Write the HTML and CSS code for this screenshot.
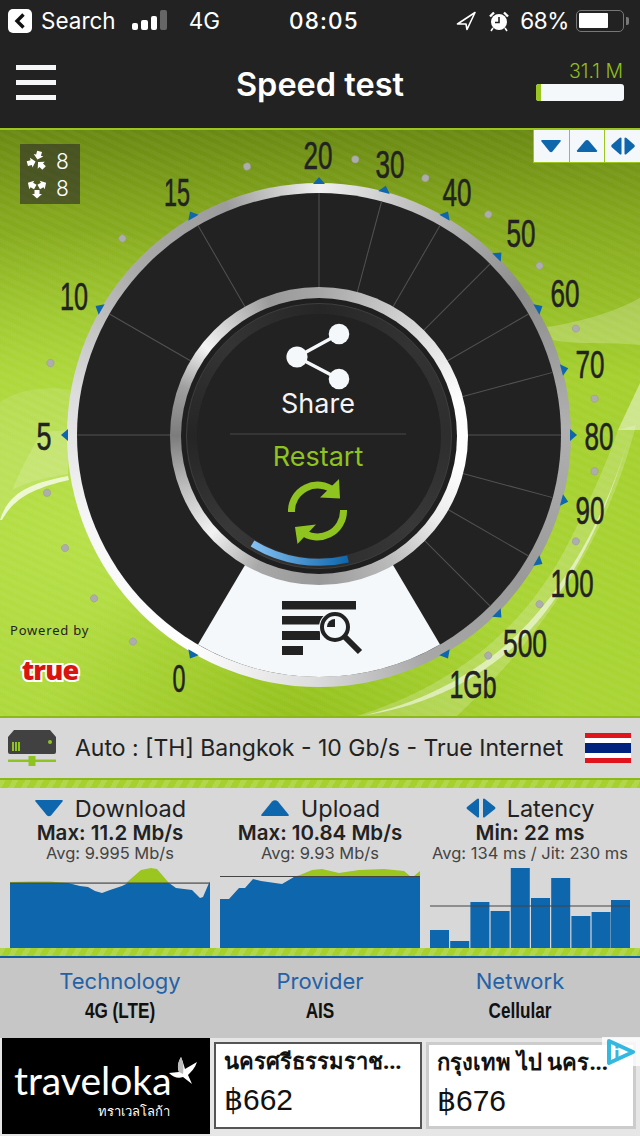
FILE: index.html
```html
<!DOCTYPE html>
<html lang="en">
<head>
    <meta charset="UTF-8">
    <meta name="viewport" content="width=device-width, initial-scale=1.0">
    <title>Speed test</title>
    <link rel="stylesheet" href="styles.css">
</head>
<body>
    <div class="status-bar">
        <div class="status-left">
            <span class="back-chip">
                <svg width="12" height="16" viewBox="0 0 12 16"><path d="M9.500 1.500 3 8l6.500 6.500" fill="none" stroke="#111" stroke-width="3.400"/></svg>
            </span>
            <span class="status-search">Search</span>
            <span class="signal"><i class="s1"></i><i class="s2"></i><i class="s3"></i><i class="s4"></i></span>
            <span class="status-net">4G</span>
        </div>
        <div class="status-time">08:05</div>
        <div class="status-right">
            <svg width="21" height="20" viewBox="0 0 21 20"><path d="M1.500 13 19 1.500 11 18.500l-1-5.500z" fill="none" stroke="#fff" stroke-width="1.600" stroke-linejoin="round"/></svg>
            <svg class="alarm" width="22" height="22" viewBox="0 0 22 22">
                <circle cx="11" cy="12" r="8" fill="#fff"/>
                <path d="M11 7v5.500H7" fill="none" stroke="#222" stroke-width="1.600"/>
                <path d="M2 6.500 6 2.500M20 6.500l-4-4" stroke="#fff" stroke-width="2.400"/>
                <path d="M5 18l-2 3M17 18l2 3" stroke="#fff" stroke-width="1.600"/>
            </svg>
            <span class="status-pct">68%</span>
            <span class="battery"><i></i></span>
            <span class="battery-nub"></span>
        </div>
    </div>

    <header class="app-bar">
        <div class="burger"><i></i><i></i><i></i></div>
        <h1>Speed test</h1>
        <div class="quota">
            <span class="quota-label">31.1 M</span>
            <span class="quota-bar"><i></i></span>
        </div>
    </header>

    <section class="dial">
        <svg class="dial-back" viewBox="0 130 640 586">
            <path d="M0 402C20 388 50 386 72 390L68 476C40 480 16 492 0 520z" fill="#fff" opacity=".12"/>
            <path d="M0 520C8 496 24 484 68 476L69 480C34 488 14 498 2 520z" fill="#fff" opacity=".75"/>
            <path d="M12 490C24 462 34 445 42 432L70 430 68 474C44 478 26 482 12 490z" fill="#fff" opacity=".16"/>
            <path d="M547 327C580 322 615 312 640 298V345C610 342 575 345 553 340z" fill="#fff" opacity=".22"/>
            <path d="M636 425C612 520 560 620 457 716H357C440 690 520 640 570 540 590 500 608 460 618 430z" fill="#fff" opacity=".2"/>
            <path d="M631 430C606 520 560 600 500 650 450 690 400 708 360 716 420 708 470 684 510 650 566 600 606 520 631 430z" fill="#fff" opacity=".55"/>
            <path d="M640 383V430L618 430z" fill="#fff" opacity=".45"/>
        </svg>

        <div class="bezel"><div class="face"></div></div>

        <svg class="dial-art" viewBox="0 130 640 586">
            <path class="wedge" d="M198 644.600A242 242 0 0 0 440 644.600L393 565 245 565z"/>

            <g class="spokes" transform="translate(319 435)">
                <line x1="-242" x2="-148"/>
                <line x1="-242" x2="-148" transform="rotate(30)"/>
                <line x1="-242" x2="-148" transform="rotate(60)"/>
                <line x1="-242" x2="-148" transform="rotate(90)"/>
                <line x1="-242" x2="-148" transform="rotate(105)"/>
                <line x1="-242" x2="-148" transform="rotate(120)"/>
                <line x1="-242" x2="-148" transform="rotate(135)"/>
                <line x1="-242" x2="-148" transform="rotate(150)"/>
                <line x1="-242" x2="-148" transform="rotate(165)"/>
                <line x1="-242" x2="-148" transform="rotate(180)"/>
                <line x1="-242" x2="-148" transform="rotate(195)"/>
                <line x1="-242" x2="-148" transform="rotate(210)"/>
                <line x1="-242" x2="-148" transform="rotate(225)"/>
            </g>

            <g class="marks" transform="translate(319 435)">
                <polygon points="-251,-6 -258,0 -251,6" transform="rotate(-60)"/>
                <polygon points="-251,-6 -258,0 -251,6"/>
                <polygon points="-251,-6 -258,0 -251,6" transform="rotate(30)"/>
                <polygon points="-251,-6 -258,0 -251,6" transform="rotate(60)"/>
                <polygon points="-251,-6 -258,0 -251,6" transform="rotate(90)"/>
                <polygon points="-251,-6 -258,0 -251,6" transform="rotate(105)"/>
                <polygon points="-251,-6 -258,0 -251,6" transform="rotate(120)"/>
                <polygon points="-251,-6 -258,0 -251,6" transform="rotate(135)"/>
                <polygon points="-251,-6 -258,0 -251,6" transform="rotate(150)"/>
                <polygon points="-251,-6 -258,0 -251,6" transform="rotate(165)"/>
                <polygon points="-251,-6 -258,0 -251,6" transform="rotate(180)"/>
                <polygon points="-251,-6 -258,0 -251,6" transform="rotate(195)"/>
                <polygon points="-251,-6 -258,0 -251,6" transform="rotate(210)"/>
                <polygon points="-251,-6 -258,0 -251,6" transform="rotate(225)"/>
                <polygon points="-251,-6 -258,0 -251,6" transform="rotate(240)"/>
            </g>

            <g class="dots" transform="translate(319 435)">
                <circle cx="-278" r="3.600" transform="rotate(-48)"/>
                <circle cx="-278" r="3.600" transform="rotate(-36)"/>
                <circle cx="-278" r="3.600" transform="rotate(-24)"/>
                <circle cx="-278" r="3.600" transform="rotate(-12)"/>
                <circle cx="-278" r="3.600" transform="rotate(15)"/>
                <circle cx="-278" r="3.600" transform="rotate(45)"/>
                <circle cx="-278" r="3.600" transform="rotate(75)"/>
                <circle cx="-278" r="3.600" transform="rotate(97.500)"/>
                <circle cx="-278" r="3.600" transform="rotate(112.500)"/>
                <circle cx="-278" r="3.600" transform="rotate(127.500)"/>
                <circle cx="-278" r="3.600" transform="rotate(142.500)"/>
                <circle cx="-278" r="3.600" transform="rotate(157.500)"/>
                <circle cx="-278" r="3.600" transform="rotate(172.500)"/>
                <circle cx="-278" r="3.600" transform="rotate(187.500)"/>
                <circle cx="-278" r="3.600" transform="rotate(202.500)"/>
                <circle cx="-278" r="3.600" transform="rotate(217.500)"/>
                <circle cx="-278" r="3.600" transform="rotate(232.500)"/>
            </g>

            <g class="ticks">
                <text x="179" y="692" textLength="13" lengthAdjust="spacingAndGlyphs">0</text>
                <text x="44" y="450" textLength="15" lengthAdjust="spacingAndGlyphs">5</text>
                <text x="74" y="310" textLength="28" lengthAdjust="spacingAndGlyphs">10</text>
                <text x="177" y="206" textLength="26" lengthAdjust="spacingAndGlyphs">15</text>
                <text x="318" y="169" textLength="29" lengthAdjust="spacingAndGlyphs">20</text>
                <text x="390" y="178" textLength="29" lengthAdjust="spacingAndGlyphs">30</text>
                <text x="457" y="206" textLength="29" lengthAdjust="spacingAndGlyphs">40</text>
                <text x="521" y="247" textLength="29" lengthAdjust="spacingAndGlyphs">50</text>
                <text x="565" y="307" textLength="29" lengthAdjust="spacingAndGlyphs">60</text>
                <text x="590" y="378" textLength="29" lengthAdjust="spacingAndGlyphs">70</text>
                <text x="599" y="450" textLength="29" lengthAdjust="spacingAndGlyphs">80</text>
                <text x="590" y="524" textLength="29" lengthAdjust="spacingAndGlyphs">90</text>
                <text x="572" y="597" textLength="43" lengthAdjust="spacingAndGlyphs">100</text>
                <text x="525" y="657" textLength="44" lengthAdjust="spacingAndGlyphs">500</text>
                <text x="473" y="698" textLength="47" lengthAdjust="spacingAndGlyphs">1Gb</text>
            </g>

            <g class="list-icon">
                <rect x="282" y="601" width="74" height="8.500"/>
                <rect x="282" y="616" width="44" height="8.500"/>
                <rect x="282" y="631" width="38" height="9"/>
                <rect x="282" y="646" width="21" height="9"/>
                <circle class="lens-halo" cx="335" cy="627" r="16"/>
                <circle class="lens" cx="335" cy="627" r="13"/>
                <path d="M335 627V619a8 8 0 0 0-8 8z"/>
                <path class="lens-handle" d="M345 637l15 15"/>
            </g>

            <text class="powered" x="10" y="635">Powered by</text>
            <text class="true-logo" x="50" y="680">true</text>
        </svg>

        <div class="hub"><div class="hub-band"><div class="hub-groove"><div class="hub-core"></div></div></div></div>

        <svg class="hub-art" viewBox="0 130 640 586">
            <defs>
                <linearGradient id="progress" x1="0" x2="1">
                    <stop offset="0" stop-color="#85c1f2"/>
                    <stop offset="1" stop-color="#0e66ad"/>
                </linearGradient>
            </defs>
            <path d="M252.500 543.500A127 127 0 0 0 348 559" fill="none" stroke="url(#progress)" stroke-width="7"/>

            <g class="share">
                <path d="M339 334 297 357 339 379" fill="none" stroke="#f4f8fb" stroke-width="3.400"/>
                <circle cx="339" cy="334" r="10.300"/>
                <circle cx="297" cy="357" r="10.600"/>
                <circle cx="339" cy="379" r="10.300"/>
            </g>
            <text class="hub-text share-text" x="318" y="413">Share</text>
            <line class="hub-line" x1="230" x2="406" y1="434" y2="434"/>
            <text class="hub-text restart-text" x="318" y="466">Restart</text>

            <g class="refresh">
                <path d="M291.500 512A26 26 0 0 1 334 491M343.500 510A26 26 0 0 1 301 531"/>
                <polygon points="320,497.500 339,479 340,498.500"/>
                <polygon points="316,524.500 295,527 297.500,544"/>
            </g>
        </svg>

        <div class="peers">
            <div class="peer-row">
                <svg width="22" height="22" viewBox="-11 -11 22 22">
                    <g fill="#fff">
                        <path d="M-2.500-10h5v4H5L0-1.500-5-6h2.500z" transform="rotate(15)"/>
                        <path d="M-2.500-10h5v4H5L0-1.500-5-6h2.500z" transform="rotate(135)"/>
                        <path d="M-2.500-10h5v4H5L0-1.500-5-6h2.500z" transform="rotate(255)"/>
                    </g>
                </svg>
                <span>8</span>
            </div>
            <div class="peer-row">
                <svg width="22" height="22" viewBox="-11 -11 22 22">
                    <g fill="#fff">
                        <path d="M0-10.500 5-6H2.500v4h-5V-6H-5z" transform="rotate(60)"/>
                        <path d="M0-10.500 5-6H2.500v4h-5V-6H-5z" transform="rotate(180)"/>
                        <path d="M0-10.500 5-6H2.500v4h-5V-6H-5z" transform="rotate(300)"/>
                    </g>
                </svg>
                <span>8</span>
            </div>
        </div>

        <div class="filters">
            <button class="filter"><svg width="22" height="14" viewBox="0 0 22 14"><path class="ico" d="M2 1h18q1.500 0 .5 1.500l-8 10q-1.500 1.500-3 0l-8-10Q.5 1 2 1z"/></svg></button>
            <button class="filter"><svg width="22" height="14" viewBox="0 0 22 14"><path class="ico" d="M2 13h18q1.500 0 1-1.500L13 2Q11 0 9 2L1 11.500Q.5 13 2 13z"/></svg></button>
            <button class="filter"><svg width="24" height="18" viewBox="0 0 24 18"><path class="ico" d="M10.500 1v16q-1 1-2 0L.5 10Q0 9 .5 8l8-7q1-1 2 0zM13.500 1v16q1 1 2 0l8-7q.5-1 0-2l-8-7q-1-1-2 0z"/></svg></button>
        </div>
    </section>

    <section class="server">
        <svg class="server-icon" width="48" height="36" viewBox="0 0 48 36">
            <path d="M6 0h36l6 7v15q0 2-2 2H2q-2 0-2-2V7z" fill="#414141"/>
            <path d="M4 12h2v9H4zM7 12h2v9H7zM10 12h2v9h-2z" fill="#8fc31f"/>
            <circle cx="42" cy="12" r="2" fill="#8fc31f"/>
            <path d="M0 29.500h20.500V26h7v3.500H48v2.500H27.500v4h-7v-4H0z" fill="#8fc31f"/>
        </svg>
        <span class="server-name">Auto : [TH] Bangkok - 10 Gb/s - True Internet</span>
        <div class="flag"><i class="red"></i><i class="white"></i><i class="blue"></i><i class="white"></i><i class="red"></i></div>
    </section>

    <div class="strip strip-top"></div>

    <section class="results">
        <div class="result">
            <div class="result-head">
                <svg width="30" height="18" viewBox="0 0 30 18"><path class="ico" d="M2 1h26q1.500 0 .5 1.500L17 16.500q-2 1.500-4 0L1.500 2.500Q.5 1 2 1z"/></svg>
                <span>Download</span>
            </div>
            <div class="result-max">Max: 11.2 Mb/s</div>
            <div class="result-avg">Avg: 9.995 Mb/s</div>
            <svg class="chart" viewBox="0 0 200 80">
                <path class="chart-peak" d="M0 14 20 13.500 40 13.500 58 15 116 15 131 2 141 0 147 1 159 15 199 15 200 13V16H0z"/>
                <path class="chart-area" d="M0 15H58L70 18 78 19 85 23 92 25 100 22 112 18 118 15H159L166 20 182 22 190 30 193 29 199 15H200V80H0z"/>
                <line class="chart-avg" x1="0" x2="200" y1="15" y2="15"/>
            </svg>
        </div>
        <div class="result">
            <div class="result-head">
                <svg width="30" height="18" viewBox="0 0 30 18"><path class="ico" d="M2 17h26q1.500 0 .5-1.500L18 2.500q-3-2.500-6 0L1.500 15.500Q.5 17 2 17z"/></svg>
                <span>Upload</span>
            </div>
            <div class="result-max">Max: 10.84 Mb/s</div>
            <div class="result-avg">Avg: 9.93 Mb/s</div>
            <svg class="chart" viewBox="0 0 200 80">
                <path class="chart-peak" d="M73 9 80 7 92 2 102 1 119 5 139 2 164 1 184 3 190 8 194 8 200 3V10H73z"/>
                <path class="chart-area" d="M0 31H9L19 20 25 20 33 11 41 13 62 16 74 9H200V80H0z"/>
                <line class="chart-avg" x1="0" x2="200" y1="8.500" y2="8.500"/>
            </svg>
        </div>
        <div class="result">
            <div class="result-head">
                <svg width="30" height="20" viewBox="0 0 30 20"><path class="ico" d="M13 1v18q-1 1-2 0L1 11q-1-1 0-2L11 1q1-1 2 0zM17 1v18q1 1 2 0l10-8q1-1 0-2L19 1q-1-1-2 0z"/></svg>
                <span>Latency</span>
            </div>
            <div class="result-max">Min: 22 ms</div>
            <div class="result-avg">Avg: 134 ms / Jit: 230 ms</div>
            <svg class="chart" viewBox="0 0 200 80">
                <g class="chart-area">
                    <rect x="0" y="62" width="19" height="18"/>
                    <rect x="20.200" y="73" width="19" height="7"/>
                    <rect x="40.400" y="34" width="19" height="46"/>
                    <rect x="60.600" y="43" width="19" height="37"/>
                    <rect x="80.800" y="0" width="19" height="80"/>
                    <rect x="101" y="30" width="19" height="50"/>
                    <rect x="121.200" y="10" width="19" height="70"/>
                    <rect x="141.400" y="48" width="19" height="32"/>
                    <rect x="161.600" y="44" width="19" height="36"/>
                    <rect x="181" y="32" width="19" height="48"/>
                </g>
                <line class="chart-avg" x1="0" x2="200" y1="38" y2="38"/>
            </svg>
        </div>
    </section>

    <div class="strip strip-bottom"></div>

    <section class="info">
        <div class="info-col"><div class="info-label">Technology</div><div class="info-value">4G (LTE)</div></div>
        <div class="info-col"><div class="info-label">Provider</div><div class="info-value">AIS</div></div>
        <div class="info-col"><div class="info-label">Network</div><div class="info-value">Cellular</div></div>
    </section>

    <section class="ad">
        <div class="ad-logo">
            <div class="ad-logo-word">traveloka</div>
            <div class="ad-logo-sub">ทราเวลโลก้า</div>
            <svg class="ad-bird" width="28" height="28" viewBox="0 0 28 28">
                <path d="M0 16 10 15C8 10 9 5 12 0 14 5 15 9 16 12 20 10 24 7 28 5 26 11 22 15 19 18L23 27 14 20C9 22 4 20 0 16z" fill="#fff"/>
                <path d="M10 15C8 10 9 5 12 0 14 5 15 9 14 17z" fill="#bbb"/>
            </svg>
        </div>
        <div class="ad-card ad-card-active">
            <div class="ad-route">นครศรีธรรมราช...</div>
            <div class="ad-price">฿662</div>
        </div>
        <div class="ad-card">
            <div class="ad-route">กรุงเทพ ไป นคร...</div>
            <div class="ad-price">฿676</div>
        </div>
        <div class="ad-choice">
            <svg width="28" height="26" viewBox="0 0 28 26">
                <path d="M2 2 26 13 2 24z" fill="none" stroke="#35b8e0" stroke-width="4" stroke-linejoin="round"/>
                <path d="M8.500 11h3v8h-3zM8.500 6.500h3v3h-3z" fill="#35b8e0"/>
            </svg>
        </div>
    </section>
</body>
</html>
```

FILE: styles.css
```css
* {
    box-sizing: border-box;
}
body {
    margin: 0;
    width: 640px;
    height: 1136px;
    overflow: hidden;
    font-family: Inter, Roboto, "Liberation Sans", sans-serif;
    background: #222;
    color: #222;
}
i {
    display: block;
}

/* status bar */
.status-bar {
    display: grid;
    grid-template-columns: 281px auto 1fr;
    align-items: center;
    height: 40px;
    padding: 1px 11px 0 8px;
    background: #222;
    color: #fff;
    font-size: 22.500px;
}
.status-left {
    display: flex;
    align-items: center;
}
.back-chip {
    display: flex;
    align-items: center;
    justify-content: center;
    width: 24px;
    height: 24px;
    border-radius: 5px;
    background: #fff;
}
.status-search {
    margin-left: 9px;
}
.signal {
    display: flex;
    align-items: flex-end;
    gap: 3px;
    height: 20px;
    margin-left: 16px;
    margin-top: -1px;
}
.signal i {
    width: 6.500px;
    border-radius: 2px;
    background: #fff;
}
.signal .s1 { height: 7px; }
.signal .s2 { height: 10px; }
.signal .s3 { height: 14px; }
.signal .s4 { height: 20px; background: #666; }
.status-net {
    margin-left: 22px;
}
.status-time {
    font-weight: 500;
    letter-spacing: 1.2px;
}
.status-right {
    display: flex;
    align-items: center;
    justify-content: flex-end;
}
.alarm {
    margin-left: 11px;
}
.status-pct {
    margin-left: 10px;
    letter-spacing: -0.4px;
}
.battery {
    width: 48px;
    height: 22px;
    margin-left: 7px;
    padding: 2px;
    border: 1.500px solid #777;
    border-radius: 5px;
}
.battery i {
    width: 29px;
    height: 15px;
    background: #fff;
    border-radius: 1px;
}
.battery-nub {
    width: 3px;
    height: 8px;
    margin-left: 2px;
    background: #777;
    border-radius: 0 2px 2px 0;
}

/* header */
.app-bar {
    display: grid;
    grid-template-columns: 1fr auto 1fr;
    align-items: center;
    height: 88px;
    padding: 0 16px;
    background: #222;
    color: #fff;
}
.app-bar h1 {
    margin: 0;
    font-size: 32.500px;
    font-weight: 600;
}
.burger {
    display: flex;
    flex-direction: column;
    gap: 10px;
    width: 40px;
    margin-top: -4px;
}
.burger i {
    height: 5px;
    background: #f4f6f8;
}
.quota {
    display: flex;
    flex-direction: column;
    align-items: flex-end;
    justify-self: end;
    width: 88px;
    margin-top: -6px;
}
.quota-label {
    padding-right: 1px;
    color: #8fbe1c;
    font-size: 19.500px;
    font-weight: 300;
    line-height: 20px;
}
.quota-bar {
    width: 88px;
    height: 17px;
    margin-top: 3px;
    background: #f4f8fb;
    border-radius: 3px;
    overflow: hidden;
}
.quota-bar i {
    width: 5px;
    height: 100%;
    background: #9ac61f;
}

/* dial */
.dial {
    position: relative;
    height: 590px;
    border-top: 2px solid #9ac61f;
    border-bottom: 2px solid #8db81c;
    background:
        repeating-linear-gradient(205deg, rgba(255, 255, 255, 0.035) 0 4px, transparent 4px 8px),
        radial-gradient(ellipse 260px 180px at 300px 590px, #95c11e 0, rgba(149, 193, 30, 0) 100%),
        radial-gradient(ellipse 480px 300px at 90px 400px, #b7e049 0, rgba(183, 224, 73, 0) 100%),
        linear-gradient(#6a8913 0, #83a61d 14%, #a5d02f 42%, #a9d535 100%);
}
.dial-back,
.dial-art,
.hub-art {
    position: absolute;
    left: 0;
    top: 0;
    width: 640px;
    height: 586px;
}
.bezel {
    position: absolute;
    left: 67px;
    top: 53px;
    display: flex;
    align-items: center;
    justify-content: center;
    width: 504px;
    height: 504px;
    border-radius: 50%;
    background: conic-gradient(#f0f0f0 0deg, #c4c4c4 20deg, #8c8c8c 55deg, #b0b0b0 88deg, #9a9a9a 125deg, #a8a8a8 155deg, #dedede 182deg, #fff 212deg, #f6f6f6 250deg, #dcdcdc 280deg, #aaa 312deg, #9c9c9c 338deg, #f0f0f0 360deg);
}
.face {
    width: 484px;
    height: 484px;
    border-radius: 50%;
    background: #222;
}
.wedge {
    fill: #f4f8fb;
}
.spokes line {
    stroke: #525252;
    stroke-width: 1;
}
.marks polygon {
    fill: #0e66ad;
}
.dots circle {
    fill: #adadad;
    stroke: #999;
    stroke-width: 0.5;
}
.ticks text {
    font-family: "Liberation Sans", sans-serif;
    font-size: 39px;
    text-anchor: middle;
    fill: #222;
    stroke: #222;
    stroke-width: 0.6px;
}
.list-icon rect,
.list-icon path {
    fill: #222;
}
.list-icon .lens-halo {
    fill: #f4f8fb;
}
.list-icon .lens {
    fill: #f4f8fb;
    stroke: #222;
    stroke-width: 4;
}
.list-icon .lens-handle {
    fill: none;
    stroke: #222;
    stroke-width: 6;
}
.powered {
    font-family: "Noto Sans", sans-serif;
    font-size: 13px;
    letter-spacing: 0.8px;
    fill: #222;
}
.true-logo {
    font-family: "Open Sans", sans-serif;
    font-size: 27px;
    font-weight: 800;
    text-anchor: middle;
    letter-spacing: -0.8px;
    fill: #d9140f;
    stroke: #fff;
    stroke-width: 4px;
    paint-order: stroke;
}
.hub {
    position: absolute;
    left: 170px;
    top: 157px;
    display: flex;
    align-items: center;
    justify-content: center;
    width: 298px;
    height: 298px;
    border-radius: 50%;
    background: conic-gradient(#a6a6a6 0deg, #d0d0d0 35deg, #fdfdfd 75deg, #fff 100deg, #ececec 125deg, #bbb 150deg, #999 180deg, #a8a8a8 205deg, #f2f2f2 228deg, #bbb 250deg, #7c7c7c 270deg, #a0a0a0 290deg, #f4f4f4 308deg, #9a9a9a 340deg, #a6a6a6 360deg);
}
.hub-band {
    display: flex;
    align-items: center;
    justify-content: center;
    width: 276px;
    height: 276px;
    border-radius: 50%;
    background: #1f1f1f;
}
.hub-groove {
    display: flex;
    align-items: center;
    justify-content: center;
    width: 266px;
    height: 266px;
    border-radius: 50%;
    border: 1px solid #3e3e3e;
    background: conic-gradient(#262626 0deg, #333 45deg, #2e2e2e 90deg, #383838 135deg, #2c2c2c 180deg, #383838 225deg, #252525 270deg, #343434 315deg, #262626 360deg);
}
.hub-core {
    width: 244px;
    height: 244px;
    border-radius: 50%;
    background: #222;
}
.share circle {
    fill: #f4f8fb;
}
.hub-text {
    font-size: 27px;
    text-anchor: middle;
}
.share-text {
    fill: #f4f4f4;
}
.restart-text {
    fill: #8fc31f;
}
.hub-line {
    stroke: #3c3c3c;
    stroke-width: 1.500;
}
.refresh path {
    fill: none;
    stroke: #8fc31f;
    stroke-width: 7;
}
.refresh polygon {
    fill: #8fc31f;
}
.peers {
    position: absolute;
    left: 20px;
    top: 14px;
    display: flex;
    flex-direction: column;
    gap: 3px;
    width: 60px;
    height: 60px;
    padding: 5px 0 0 6px;
    background: rgba(50, 50, 40, 0.65);
    color: #fff;
    font-size: 21px;
    font-weight: 300;
}
.peer-row {
    display: flex;
    align-items: center;
    gap: 8px;
    height: 24px;
}
.filters {
    position: absolute;
    right: 0;
    top: 0;
    display: flex;
    width: 107px;
    height: 33px;
    background: #9ac61f;
    gap: 1px;
    padding: 0 0 1px 1px;
}
.filter {
    flex: 1;
    display: flex;
    align-items: center;
    justify-content: center;
    padding: 0;
    border: 0;
    background: #f4f8fb;
}
.ico {
    fill: #0e66ad;
}

/* server row */
.server {
    display: flex;
    align-items: center;
    height: 60px;
    padding: 0 9px 0 8px;
    background: #d8d8d8;
}
.server-name {
    flex: 1;
    margin-left: 19px;
    font-size: 23px;
    white-space: nowrap;
}
.flag {
    width: 46px;
    height: 30px;
}
.flag i { height: 5px; }
.flag .red { background: #e0141c; }
.flag .white { background: #fff; }
.flag .blue { height: 10px; background: #00247d; }

/* green strips */
.strip {
    background:
        repeating-linear-gradient(120deg, rgba(255, 255, 255, 0.14) 0 5px, transparent 5px 11px),
        #a6d02e;
}
.strip-top {
    height: 10px;
    border-top: 2px solid #8db81c;
}
.strip-bottom {
    height: 10px;
    border-bottom: 2px solid #0e5ea3;
}

/* results */
.results {
    display: grid;
    grid-template-columns: repeat(3, 200px);
    gap: 10px;
    height: 160px;
    padding: 0 10px;
    background: #d8d8d8;
}
.result {
    display: flex;
    flex-direction: column;
    align-items: center;
}
.result-head {
    display: flex;
    align-items: center;
    gap: 11px;
    height: 40px;
    font-size: 23.500px;
    white-space: nowrap;
}
.result-max {
    height: 20px;
    margin-top: -5px;
    line-height: 20px;
    font-size: 20.500px;
    font-weight: 600;
    white-space: nowrap;
}
.result-avg {
    height: 21px;
    line-height: 21px;
    font-size: 16.500px;
    color: #444;
    white-space: nowrap;
}
.chart {
    display: block;
    width: 200px;
    height: 80px;
    margin-top: 4px;
}
.chart-peak {
    fill: #9ac61f;
}
.chart-area {
    fill: #0e66ad;
}
.chart-avg {
    stroke: #444;
    stroke-width: 1;
}

/* info row */
.info {
    display: grid;
    grid-template-columns: repeat(3, 200px);
    height: 80px;
    padding: 8px 20px 0;
    background: #c6c6c6;
    text-align: center;
}
.info-label {
    height: 30px;
    line-height: 30px;
    color: #2462a8;
    font-size: 22px;
}
.info-value {
    height: 30px;
    line-height: 30px;
    color: #111;
    font-family: "Liberation Sans", sans-serif;
    font-size: 22px;
    font-weight: 700;
    transform: scaleX(0.78);
}

/* ad */
.ad {
    position: relative;
    display: grid;
    grid-template-columns: 208px 208px 210px;
    gap: 4px;
    height: 98px;
    padding: 0 4px 0 2px;
    background: #e6e6e6;
}
.ad-logo {
    position: relative;
    height: 96px;
    padding: 23px 0 0 12px;
    background: #000;
    color: #fff;
}
.ad-logo-word {
    font-family: Lato, sans-serif;
    font-size: 39px;
    line-height: 38px;
}
.ad-logo-sub {
    margin-top: 5px;
    padding-right: 40px;
    text-align: right;
    font-family: "Noto Sans", sans-serif;
    font-size: 13px;
    line-height: 14px;
}
.ad-bird {
    position: absolute;
    left: 167px;
    top: 19px;
}
.ad-card {
    align-self: center;
    height: 87px;
    margin-top: -4px;
    padding: 0 0 0 8px;
    border: 3px solid #ccc;
    background: #fff;
    overflow: hidden;
    color: #111;
}
.ad-card-active {
    border: 2px solid #555;
}
.ad-route {
    font-family: "Noto Sans", "Liberation Sans", sans-serif;
    font-size: 22px;
    font-weight: 700;
    line-height: 32px;
    white-space: nowrap;
}
.ad-price {
    margin-top: 6px;
    font-family: "Liberation Sans", sans-serif;
    font-size: 30px;
    line-height: 36px;
}
.ad-choice {
    position: absolute;
    right: 0;
    top: -1px;
    display: flex;
    align-items: center;
    justify-content: center;
    width: 38px;
    height: 29px;
    background: rgba(255, 255, 255, 0.8);
}
```
